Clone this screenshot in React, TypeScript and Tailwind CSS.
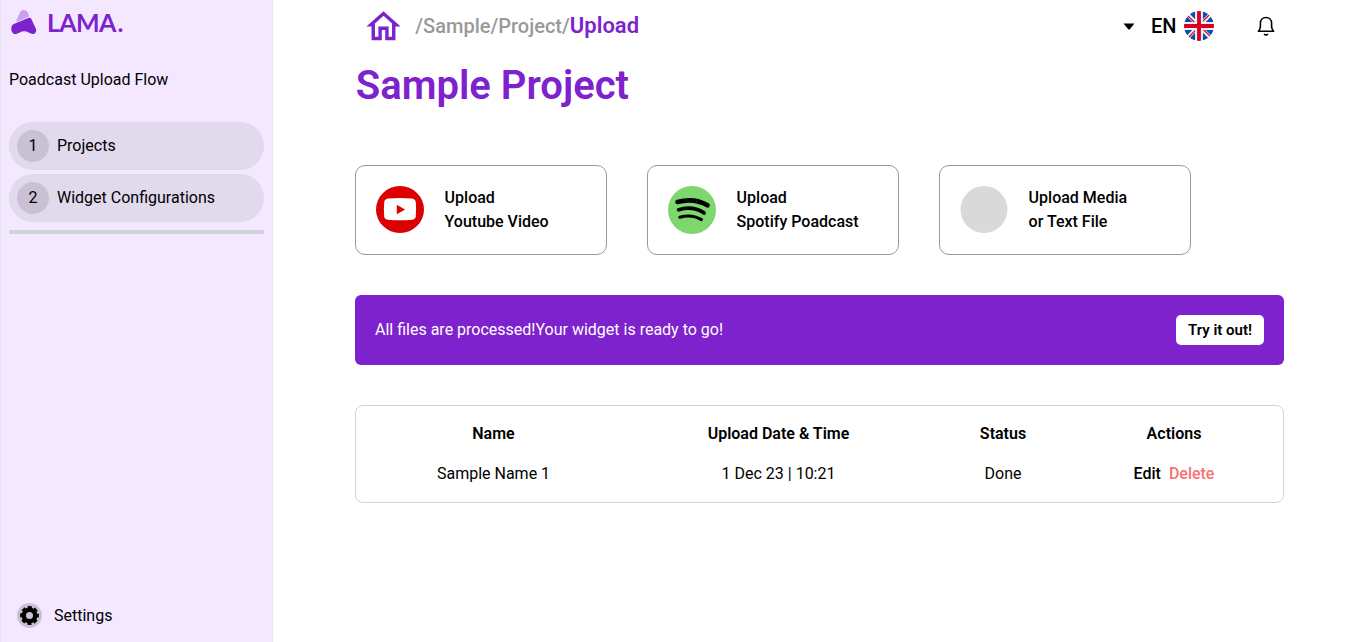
import type { ReactNode } from "react";

function LogoMark() {
  return (
    <svg width="26" height="25" viewBox="0 0 26 25" className="shrink-0">
      <path d="M5.4 10.6L8.8 2.9C9.7 0.9 11 0 12.8 0C14.6 0 15.9 0.9 16.8 2.7L17.7 4.7C18.2 5.9 17.9 6.5 16.9 7L7 11.5C5.6 12.1 4.9 11.8 5.4 10.6Z" fill="#c9a0ee" />
      <path d="M2.8 13.9L17.8 7.8C18.9 7.4 19.7 7.7 20.2 8.8L24.8 18.4C26.1 21.6 24 24.6 21.2 24C18.7 23.4 16.8 21.2 13.2 21.2C9.6 21.2 8 23.3 5.2 24C2.4 24.6 0.3 22.2 0.3 18.8C0.3 16.4 1 14.7 2.8 13.9Z" fill="#7e22ce" />
    </svg>
  );
}

function Flag() {
  return (
    <svg width="30" height="30" viewBox="0 0 512 512">
      <clipPath id="flag"><circle cx="256" cy="256" r="256" /></clipPath>
      <g clipPath="url(#flag)">
        <path fill="#f0f0f0" d="M0 0h512v512H0z" />
        <path fill="#0052b4" d="M53 100A256 256 0 0 0 9 189h133zM503 189a256 256 0 0 0-44-89l-89 89zM9 323a256 256 0 0 0 44 89l89-89zM412 53a256 256 0 0 0-89-44v133zM100 459a256 256 0 0 0 89 44V370zM189 9a256 256 0 0 0-89 44l89 89zM323 503a256 256 0 0 0 89-44l-89-89zM370 323l89 89a256 256 0 0 0 44-89z" />
        <path fill="#d80027" d="M0 223h223V0h66v223h223v66H289v223h-66V289H0z" />
        <path fill="#d80027" d="M323 323l114 114 15-16-98-98zM189 323L75 437l16 15 98-99zM189 189L75 75 60 91l98 98zM323 189L437 75l-16-15-98 98z" />
      </g>
    </svg>
  );
}

function Step({ n, label }: { n: number; label: string }) {
  return (
    <div className="flex h-12 items-center gap-2 rounded-full bg-[#e1d9ec] px-2">
      <span className="flex size-8 items-center justify-center rounded-full bg-[#cac2d4]">{n}</span>
      <span>{label}</span>
    </div>
  );
}

function UploadCard({ icon, second, first }: { icon: ReactNode; first: string; second: string }) {
  return (
    <div className="flex h-[90px] w-[252px] items-center gap-[20.6px] rounded-[10px] border border-[#999] px-5 font-medium">
      {icon}
      <p>{first}<br />{second}</p>
    </div>
  );
}

export default function App() {
  return (
    <div className="flex h-[642px] bg-white font-['Roboto',sans-serif] text-base text-black">
      <aside className="flex w-[273px] shrink-0 flex-col border-x border-gray-200 bg-[#f3e8ff] px-2">
        <div className="mt-[10px] flex h-[25px] items-center gap-[10px] pl-[2px]">
          <LogoMark />
          <span className="mb-[2px] font-['Lato',sans-serif] text-[25px] leading-6 font-bold tracking-[-0.7px] text-[#7e22ce]">LAMA<span className="ml-[2px]">.</span></span>
        </div>
        <p className="mt-[33px]">Poadcast Upload Flow</p>
        <nav className="mt-[30px] flex flex-col gap-1">
          <Step n={1} label="Projects" />
          <Step n={2} label="Widget Configurations" />
        </nav>
        <div className="mt-2 h-1 bg-[#d1d5db]" />
        <div className="mt-auto mb-[14px] flex items-center gap-3 pl-2">
          <span className="flex size-[25px] items-center justify-center rounded-full bg-[#cac2d4]">
            <svg width="19" height="19" viewBox="-10 -10 20 20">
              <circle r="6" fill="none" stroke="black" strokeWidth="4.6" />
              <circle r="8.4" fill="none" stroke="black" strokeWidth="3" strokeDasharray="4.2 2.397" strokeDashoffset="2.1" />
            </svg>
          </span>
          <span>Settings</span>
        </div>
      </aside>

      <main className="ml-[82px] flex w-[929px] flex-col">
        <header className="flex h-[52px] items-center">
          <svg width="41" height="41" viewBox="0 0 24 24" className="ml-2" fill="#7e22ce">
            <path d="M12 5.69l5 4.5V18h-2v-6H9v6H7v-7.81l5-4.5M12 3L2 12h3v8h6v-6h2v6h6v-8h3L12 3z" />
          </svg>
          <p className="ml-[11.3px] flex items-center text-xl font-medium text-[#999]">
            <span>/Sample/Project/</span><span className="text-[22px] font-semibold text-[#7e22ce]">Upload</span>
          </p>
          <div className="ml-auto flex items-center">
            <svg width="12" height="7" viewBox="0 0 12 7"><path d="M0.5 0.5H11.5L7 6Q6 7 5 6Z" /></svg>
            <span className="mr-[7.5px] ml-[16.5px] text-xl font-medium">EN</span>
            <Flag />
            <svg width="20" height="22" viewBox="0 0 20 22" className="mr-2 ml-[42px]" fill="none" stroke="black" strokeWidth="1.6" strokeLinejoin="round">
              <path d="M2.4 16.3C3.8 14.8 4.4 13.6 4.4 11.6V8.4C4.4 5 6.8 2.5 10 2.5S15.6 5 15.6 8.4V11.6C15.6 13.6 16.2 14.8 17.6 16.3Z" />
              <path d="M8 19.2Q10 20.6 12 19.2" />
            </svg>
          </div>
        </header>
        <h1 className="mt-[13px] ml-[0.8px] text-[40px] leading-[42px] font-semibold text-[#7e22ce]">Sample Project</h1>

        <section className="mt-[58px] flex gap-10">
          <UploadCard first="Upload" second="Youtube Video" icon={
            <svg width="48" height="48" viewBox="0 0 48 48">
              <ellipse cx="24" cy="23.5" rx="24" ry="23.5" fill="#dc0000" />
              <path d="M12 12.6Q24 11.6 36 12.6Q39.4 13 39.8 16.4Q40.4 23 39.8 30.2Q39.4 33.4 36 33.8Q24 34.9 12 33.8Q8.6 33.4 8.2 30.2Q7.6 23 8.2 16.4Q8.6 13 12 12.6Z" fill="white" />
              <path d="M20.8 18.8V28.2L29 23.5Z" fill="#dc0000" />
            </svg>
          } />
          <UploadCard first="Upload" second="Spotify Poadcast" icon={
            <svg width="48" height="48" viewBox="0 0 48 48">
              <circle cx="24" cy="24" r="24" fill="#7ed76c" />
              <g fill="none" stroke="black" strokeLinecap="round">
                <path d="M9.5 16Q26 11.5 39.5 19.3" strokeWidth="4.6" />
                <path d="M10.7 23.7Q24.5 19.5 36 26.9" strokeWidth="3.8" />
                <path d="M11.8 31.2Q23.5 27.7 33.5 33.6" strokeWidth="3" />
              </g>
            </svg>
          } />
          <UploadCard first="Upload Media" second="or Text File" icon={
            <svg width="48" height="48" viewBox="0 0 48 48"><circle cx="24" cy="23.5" r="23.5" fill="#d9d9d9" /></svg>
          } />
        </section>

        <section className="mt-10 flex h-[70px] items-center justify-between rounded-md bg-[#7e22ce] px-5 text-white">
          <p>All files are processed!Your widget is ready to go!</p>
          <button className="h-[30px] w-[88px] rounded-[5px] bg-white text-[15px] font-semibold text-black">Try it out!</button>
        </section>

        <section className="mt-10 grid h-[98px] grid-cols-[275px_295px_154px_188px] grid-rows-[40px_40px] items-center rounded-lg border border-[#d1d5db] pt-2 text-center">
          <b className="font-semibold">Name</b>
          <b className="font-semibold">Upload Date &amp; Time</b>
          <b className="font-semibold">Status</b>
          <b className="font-semibold">Actions</b>
          <span>Sample Name 1</span>
          <span>1 Dec 23 | 10:21</span>
          <span>Done</span>
          <span className="flex justify-center gap-2 font-medium">
            <button>Edit</button><button className="text-[#f87171]">Delete</button>
          </span>
        </section>
      </main>
    </div>
  );
}
